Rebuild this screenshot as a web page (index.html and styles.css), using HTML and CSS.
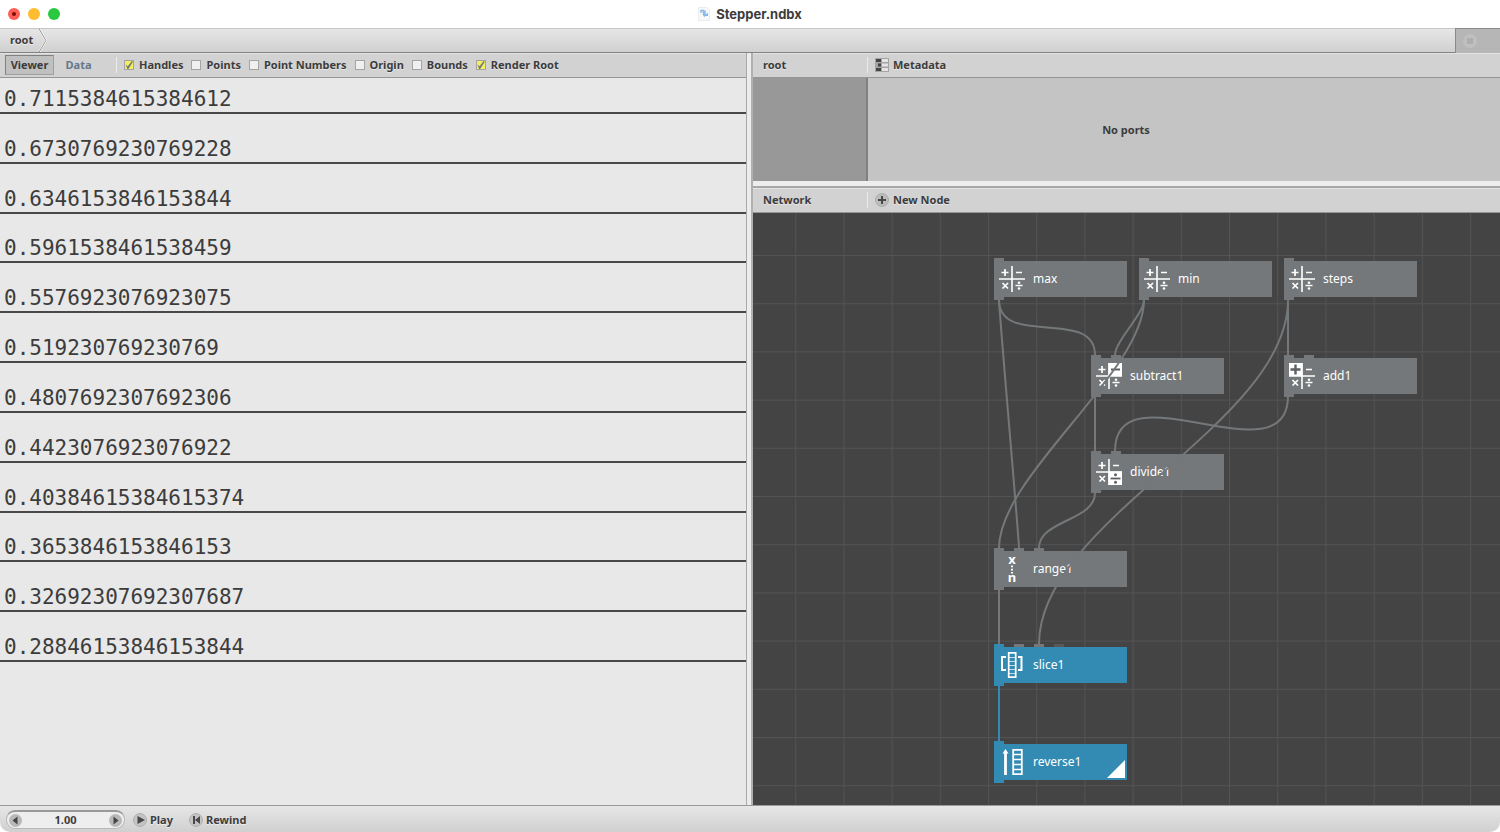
FILE: index.html
```html
<!DOCTYPE html>
<html lang="en">
<head>
<meta charset="utf-8">
<title>Stepper.ndbx</title>
<link rel="stylesheet" href="styles.css">
</head>
<body>
<svg class="sprite" aria-hidden="true">
  <symbol id="math" viewBox="0 0 26 26">
    <path d="M13 0v26M0 13h26" stroke-width="1.6"/>
    <path d="M6 3v7M2.500 6.500h7M17 6.500h6M3.500 17l5.500 5.500M9 17l-5.500 5.500M16.500 19.500h7" stroke-width="1.700"/>
    <circle cx="20" cy="16.700" r="1.300"/><circle cx="20" cy="22.500" r="1.300"/>
  </symbol>
  <symbol id="subtract" viewBox="0 0 26 26">
    <path d="M13 0v26M0 13h26" stroke-width="1.6"/>
    <path d="M6 3v7M2.500 6.500h7M3.500 17l5.500 5.500M9 17l-5.500 5.500M16.500 19.500h7" stroke-width="1.700"/>
    <circle cx="20" cy="16.700" r="1.300"/><circle cx="20" cy="22.500" r="1.300"/>
    <path class="plate" d="M12.500 0H26v13H12.500z"/>
    <path class="ink" d="M15 6.500h9" stroke-width="2"/>
  </symbol>
  <symbol id="add" viewBox="0 0 26 26">
    <path d="M13 0v26M0 13h26" stroke-width="1.6"/>
    <path d="M17 6.500h6M3.500 17l5.500 5.500M9 17l-5.500 5.500M16.500 19.500h7" stroke-width="1.700"/>
    <circle cx="20" cy="16.700" r="1.300"/><circle cx="20" cy="22.500" r="1.300"/>
    <path class="plate" d="M0 0h13.500v13H0z"/>
    <path class="ink" d="M6.500 1.500v10M1.500 6.500h10" stroke-width="2.400"/>
  </symbol>
  <symbol id="divide" viewBox="0 0 26 26">
    <path d="M13 0v26M0 13h26" stroke-width="1.6"/>
    <path d="M6 3v7M2.500 6.500h7M17 6.500h6M3.500 17l5.500 5.500M9 17l-5.500 5.500" stroke-width="1.700"/>
    <path class="plate" d="M12.500 12.500H26V26H12.500z"/>
    <path class="ink" d="M14.500 19.500h10" stroke-width="1.800"/>
    <circle class="dot" cx="19.500" cy="15.800" r="1.500"/><circle class="dot" cx="19.500" cy="23.200" r="1.500"/>
  </symbol>
  <symbol id="slice" viewBox="0 0 26 26">
    <path d="M7 5H3v13h4M19 5h3.500v13H19" stroke-width="2"/>
    <path d="M9.700.8h7v24.400h-7z" stroke-width="1.700"/>
    <path d="M10 5.500h7M10 9.500h7M10 13.500h7M10 17.500h7M10 21.500h7" stroke-width="1" opacity=".7"/>
  </symbol>
  <symbol id="reverse" viewBox="0 0 26 26">
    <path d="M6.500 3v23" stroke-width="2.800"/>
    <path class="plate" d="M3.500 4.500l3-4.500 3 4.500z"/>
    <path d="M14.200.9h8.600v24.200h-8.600z" stroke-width="1.800"/>
    <path d="M14 5.500h9M14 10.500h9M14 15.500h9M14 20.500h9" stroke-width="1.400"/>
  </symbol>
</svg>

<div class="window">
  <header class="titlebar">
    <div class="lights">
      <button class="light close" aria-label="Close"></button>
      <button class="light minimize" aria-label="Minimize"></button>
      <button class="light zoom" aria-label="Zoom"></button>
    </div>
    <h1 class="title">
      <svg class="doc" viewBox="0 0 12 14" aria-hidden="true"><path d="M.5.5H9l2.500 2.500v10.500H.5z" fill="#f8f8f8" stroke="#ececec"/><path d="M3 6V3.500h2.500V8M7 3.500v4.700h2.300V6M5.500 8L7 9.500" fill="none" stroke="#82b8e8" stroke-width="1.400"/></svg>
      Stepper.ndbx
    </h1>
  </header>

  <nav class="address">
    <a class="crumb" href="#">root</a>
    <svg class="chevron" viewBox="0 0 8 24" aria-hidden="true"><path d="M0 0l7 12-7 12" fill="none" stroke="#fff" stroke-width="2"/><path d="M0 0l7 12-7 12" fill="none" stroke="#8f8f8f"/></svg>
    <button class="stop" aria-label="Stop"><span class="stop-disc"></span></button>
  </nav>

  <main class="panes">
    <section class="viewer">
      <div class="toolbar viewer-bar">
        <button class="tab active">Viewer</button>
        <button class="tab">Data</button>
        <div class="options">
          <label class="option"><input type="checkbox" checked>Handles</label>
          <label class="option"><input type="checkbox">Points</label>
          <label class="option"><input type="checkbox">Point Numbers</label>
          <label class="option"><input type="checkbox">Origin</label>
          <label class="option"><input type="checkbox">Bounds</label>
          <label class="option"><input type="checkbox" checked>Render Root</label>
        </div>
      </div>
      <ul class="values">
        <li>0.7115384615384612</li>
        <li>0.6730769230769228</li>
        <li>0.6346153846153844</li>
        <li>0.5961538461538459</li>
        <li>0.5576923076923075</li>
        <li>0.519230769230769</li>
        <li>0.4807692307692306</li>
        <li>0.4423076923076922</li>
        <li>0.40384615384615374</li>
        <li>0.3653846153846153</li>
        <li>0.32692307692307687</li>
        <li>0.28846153846153844</li>
      </ul>
    </section>

    <div class="splitter"></div>

    <section class="editor">
      <div class="toolbar">
        <span class="pane-name">root</span>
        <button class="action">
          <svg class="action-icon" viewBox="0 0 14 14" aria-hidden="true"><path d="M0 0h14v14H0z" fill="#a4a4a4"/><path d="M1 1h5v3H1zM3 5.500h3v3H3zM1 10h5v3H1z" fill="#444"/><path d="M7 1h6v3H7zM7 5.500h6v3H7zM7 10h6v3H7z" fill="#e4e4e4"/></svg>
          Metadata
        </button>
      </div>
      <div class="ports">
        <div class="ports-side"></div>
        <p class="ports-empty">No ports</p>
      </div>
      <div class="row-splitter"></div>
      <div class="toolbar">
        <span class="pane-name">Network</span>
        <button class="action">
          <svg class="action-icon" viewBox="0 0 14 14" aria-hidden="true"><circle cx="7" cy="7" r="6.500" fill="#bcbcbc" stroke="#adadad"/><path d="M7 3v8M3 7h8" stroke="#484848" stroke-width="2"/></svg>
          New Node
        </button>
      </div>
      <div class="canvas">
        <svg class="grid" aria-hidden="true">
          <defs><pattern id="cells" x="-6" y="42" width="48.200" height="48.200" patternUnits="userSpaceOnUse"><path d="M0 .5h49M.5 0v49" stroke="#535353" fill="none"/></pattern></defs>
          <rect width="100%" height="100%" fill="url(#cells)"/>
        </svg>

        <div class="node" style="left:241px;top:48px"><i class="port in"></i><svg class="icon"><use href="#math"/></svg>max<i class="port out"></i></div>
        <div class="node" style="left:386px;top:48px"><i class="port in"></i><svg class="icon"><use href="#math"/></svg>min<i class="port out"></i></div>
        <div class="node" style="left:531px;top:48px"><i class="port in"></i><svg class="icon"><use href="#math"/></svg>steps<i class="port out"></i></div>
        <div class="node" style="left:338px;top:145px"><i class="port in"></i><i class="port in second"></i><svg class="icon"><use href="#subtract"/></svg>subtract1<i class="port out"></i></div>
        <div class="node" style="left:531px;top:145px"><i class="port in"></i><i class="port in second"></i><svg class="icon"><use href="#add"/></svg>add1<i class="port out"></i></div>
        <div class="node" style="left:338px;top:241px"><i class="port in"></i><i class="port in second"></i><svg class="icon"><use href="#divide"/></svg>divide1<i class="port out"></i></div>
        <div class="node" style="left:241px;top:338px"><i class="port in"></i><i class="port in second"></i><i class="port in third"></i><svg class="icon" viewBox="0 0 26 26"><text class="range-letter" x="13" y="8">x</text><path d="M13 9.500v8" stroke-width="2" stroke-dasharray="1.800 1.500"/><text class="range-letter" x="13" y="26">n</text></svg>range1<i class="port out"></i></div>
        <div class="node blue" style="left:241px;top:434px"><i class="port in"></i><i class="port in second"></i><i class="port in third"></i><i class="port in fourth"></i><svg class="icon"><use href="#slice"/></svg>slice1<i class="port out"></i></div>
        <div class="node blue rendered" style="left:241px;top:531px"><i class="port in"></i><svg class="icon"><use href="#reverse"/></svg>reverse1<i class="port out"></i></div>

        <svg class="wires" aria-hidden="true">
          <path d="M246 87C246 135 342 94 342 142"/>
          <path d="M246 87C246 97 266 325 266 335"/>
          <path d="M391 87C391 101 362 128 362 142"/>
          <path d="M391 87C391 159 246 263 246 335"/>
          <path d="M535 87v55"/>
          <path d="M535 87C535 211 286 307 286 431"/>
          <path d="M342 184v55"/>
          <path d="M535 183C535 269 362 152 362 238"/>
          <path d="M342 280C342 308 286 307 286 335"/>
          <path d="M246 377v54"/>
          <path class="blue-wire" d="M246 473v55"/>
        </svg>
      </div>
    </section>
  </main>

  <footer class="player">
    <div class="frame">
      <button class="step" aria-label="Previous frame"><svg viewBox="0 0 13 13"><path d="M8.500 2.500v8L3.500 6.500z"/></svg></button>
      <input class="frame-value" type="text" value="1.00" aria-label="Frame">
      <button class="step" aria-label="Next frame"><svg viewBox="0 0 13 13"><path d="M4.500 2.500v8l5-4z"/></svg></button>
    </div>
    <button class="play"><svg class="play-icon" viewBox="0 0 14 14" aria-hidden="true"><circle cx="7" cy="7" r="6.500"/><path d="M4.500 3v8L12 7z"/></svg>Play</button>
    <button class="play"><svg class="play-icon" viewBox="0 0 14 14" aria-hidden="true"><circle cx="7" cy="7" r="6.500"/><path d="M4 3h2v8H4zM11 3v8L6 7z"/></svg>Rewind</button>
  </footer>
</div>
</body>
</html>
```
FILE: styles.css
```css
* { box-sizing: border-box; }

body {
  margin: 0;
  background: #fff;
  color: #3c3c3c;
  font: bold 11px/16px "Noto Sans", "Open Sans", sans-serif;
}

button, input {
  margin: 0;
  padding: 0;
  border: 0;
  background: none;
  color: inherit;
  font: inherit;
}

.sprite {
  position: absolute;
  width: 0;
  height: 0;
}

.window {
  display: flex;
  flex-direction: column;
  height: 100vh;
  overflow: hidden;
  border-radius: 0 0 10px 10px;
}

/* Title bar */
.titlebar {
  display: grid;
  grid-template-columns: 1fr auto 1fr;
  align-items: center;
  height: 28px;
  padding: 0 8px;
}

.lights { display: flex; gap: 8px; }

.light {
  display: grid;
  place-items: center;
  width: 12px;
  height: 12px;
  border-radius: 50%;
}

.close { background: #fe5f57; }
.close::after {
  content: "";
  width: 4px;
  height: 4px;
  border-radius: 50%;
  background: #7d0c08;
}
.minimize { background: #febc2e; }
.zoom { background: #28c840; }

.title {
  display: flex;
  align-items: center;
  gap: 6px;
  margin: 0;
  font: bold 13px/16px Inter, sans-serif;
}

.doc { width: 12px; height: 14px; }

/* Address bar */
.address {
  display: flex;
  height: 25px;
  border-top: 1px solid #c6c6c6;
  border-bottom: 1px solid #828282;
  background: linear-gradient(#e6e6e6, #d0d0d0);
}

.crumb {
  padding: 3px 6px 0 10px;
  color: inherit;
  text-decoration: none;
  text-shadow: 0 1px #f0f0f0;
}

.chevron { width: 8px; height: 23px; }

.stop {
  display: flex;
  align-items: center;
  width: 45px;
  margin: -1px 0 -1px auto;
  padding-left: 7px;
  border-top: 1px solid #8a8a8a;
  border-left: 1px solid #8a8a8a;
  background: #b6b6b6;
}

.stop-disc {
  display: grid;
  place-items: center;
  width: 14px;
  height: 14px;
  border-radius: 50%;
  background: #bfbfbf;
}
.stop-disc::after {
  content: "";
  width: 6px;
  height: 6px;
  background: #aeaeae;
}

/* Panes */
.panes {
  display: grid;
  grid-template-columns: calc(50% - 4px) 7px minmax(0, 1fr);
  flex: 1;
  min-height: 0;
}

.toolbar {
  display: flex;
  align-items: center;
  flex: none;
  height: 25px;
  padding-bottom: 1px;
  border-top: 1px solid #e4e4e4;
  border-bottom: 1px solid #969696;
  background: #d2d2d2;
  text-shadow: 0 1px #e8e8e8;
}

.viewer {
  display: flex;
  flex-direction: column;
  min-width: 0;
  background: #e8e8e8;
}

.viewer-bar { padding-left: 5px; }

.tab {
  width: 49px;
  height: 20px;
  border: 1px solid transparent;
  color: #64788c;
}
.tab.active {
  border-color: #808080 #a0a0a0 #a0a0a0 #808080;
  background: #c0c0c0;
  color: #3c3c3c;
}

.options {
  display: flex;
  gap: 8px;
  margin-left: 13px;
  padding-left: 7px;
  border-left: 1px solid #ececec;
}

.option {
  display: flex;
  align-items: center;
  gap: 5px;
}

.option input {
  appearance: none;
  display: grid;
  width: 10px;
  height: 10px;
  border: 1px solid #a4a4a4;
  background: #f0f0f0;
}
.option input:checked { background: #f2f060; }
.option input:checked::before {
  content: "";
  background: #777;
  clip-path: polygon(8% 45%, 35% 65%, 85% 0, 100% 10%, 42% 100%, 30% 100%);
}

.values {
  display: grid;
  grid-template-rows: 36px repeat(11, 1fr);
  height: 584px;
  margin: 0;
  padding: 0;
  list-style: none;
  font: 21px/25px "DejaVu Sans Mono", monospace;
}
.values li {
  display: flex;
  align-items: flex-end;
  padding-left: 4px;
  border-bottom: 2px solid #484848;
}

.splitter {
  border-left: 1px solid #aaa;
  border-right: 2px solid #b0b0b0;
  background: #ececec;
}

.editor {
  display: flex;
  flex-direction: column;
  min-width: 0;
}

.pane-name {
  width: 115px;
  padding-left: 10px;
  border-right: 1px solid #eaeaea;
}

.action {
  display: flex;
  align-items: center;
  gap: 4px;
  margin-left: 7px;
  text-shadow: inherit;
}
.action-icon { width: 14px; height: 14px; }

.ports {
  display: flex;
  flex: none;
  height: 103px;
  background: #c4c4c4;
}
.ports-side {
  width: 115px;
  border-right: 2px solid #808080;
  background: #989898;
}
.ports-empty {
  width: 516px;
  margin: auto 0;
  text-align: center;
}

.row-splitter {
  flex: none;
  height: 7px;
  border-bottom: 2px solid #a8a8a8;
  background: #eee;
}

/* Network canvas: nodes are placed freely */
.canvas {
  position: relative;
  flex: 1;
  min-height: 0;
  overflow: hidden;
  background: #444;
}

.grid, .wires {
  position: absolute;
  inset: 0;
  width: 100%;
  height: 100%;
}

.wires {
  fill: none;
  stroke: #74787a;
  stroke-width: 2;
}
.blue-wire { stroke: #338bb3; }

.node {
  --fill: #74787a;
  position: absolute;
  display: flex;
  align-items: center;
  gap: 8px;
  width: 133px;
  height: 36px;
  padding-left: 5px;
  background: var(--fill);
  color: #fff;
  font-weight: 400;
  font-size: 12px;
}
.node.blue { --fill: #338bb3; }

.icon {
  width: 26px;
  height: 26px;
  overflow: visible;
  fill: none;
  stroke: #fff;
}
.plate { fill: #fff; stroke: none; }
.ink { stroke: #5c6062; }
symbol circle { fill: #fff; stroke: none; }
symbol .dot { fill: #5c6062; }
.range-letter {
  fill: #fff;
  stroke: none;
  font: bold 13px "Noto Sans", sans-serif;
  text-anchor: middle;
}

.port {
  position: absolute;
  left: 0;
  width: 10px;
  height: 3px;
  background: var(--fill);
}
.port.in { top: -3px; }
.port.out { bottom: -3px; }
.port.second { left: 20px; background: #74787a; }
.port.third { left: 40px; background: #74787a; }
.port.fourth { left: 60px; background: #585858; }

.rendered::after {
  content: "";
  position: absolute;
  right: 2px;
  bottom: 2px;
  width: 18px;
  height: 18px;
  background: #fff;
  clip-path: polygon(100% 0, 100% 100%, 0 100%);
}

/* Player */
.player {
  display: flex;
  align-items: center;
  gap: 16px;
  height: 27px;
  padding: 1px 0 0 6px;
  border-top: 1px solid #999;
  background: linear-gradient(#e6e6e6, #d0d0d0);
}

.frame {
  display: flex;
  align-items: center;
  width: 119px;
  height: 19px;
  padding: 0 2px;
  border: 1px solid #b8b8b8;
  border-top: 2px solid #999;
  border-radius: 9px;
  background: #eee;
}
.frame-value {
  flex: 1;
  min-width: 0;
  text-align: center;
}
.step {
  display: flex;
  width: 13px;
  height: 13px;
  border-radius: 50%;
  background: #b8b8b8;
}
.step svg { fill: #444; }

.play {
  display: flex;
  align-items: center;
  gap: 3px;
  text-shadow: 0 1px #eee;
}
.frame + .play { margin-left: -8px; }
.play-icon {
  width: 14px;
  height: 14px;
  fill: #484848;
}
.play-icon circle { fill: #c4c4c4; stroke: #b0b0b0; }
```
